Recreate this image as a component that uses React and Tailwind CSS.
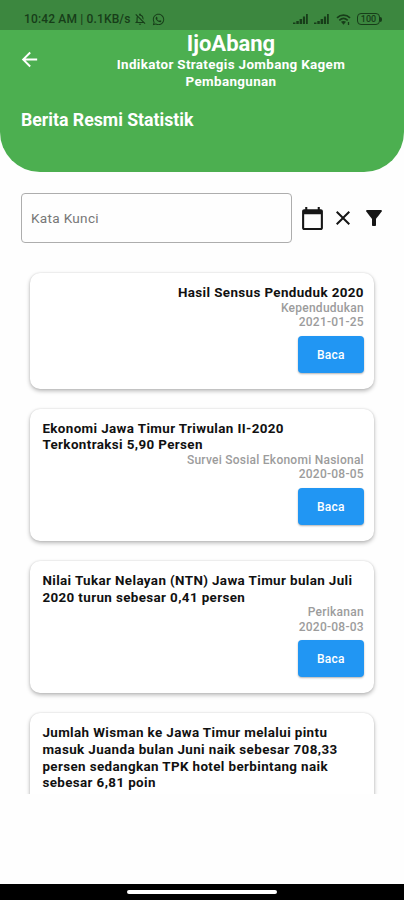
import {
  MdArrowBack,
  MdCalendarToday,
  MdClose,
  MdFilterAlt,
  MdOutlineNotificationsOff,
} from "react-icons/md";
import { FaWhatsapp } from "react-icons/fa";

const news = [
  {
    lines: ["Hasil Sensus Penduduk 2020"],
    category: "Kependudukan",
    date: "2021-01-25",
    alignRight: true,
  },
  {
    lines: ["Ekonomi Jawa Timur Triwulan II-2020", "Terkontraksi 5,90 Persen"],
    category: "Survei Sosial Ekonomi Nasional",
    date: "2020-08-05",
  },
  {
    lines: ["Nilai Tukar Nelayan (NTN) Jawa Timur bulan Juli", "2020 turun sebesar 0,41 persen"],
    category: "Perikanan",
    date: "2020-08-03",
  },
  {
    lines: [
      "Jumlah Wisman ke Jawa Timur melalui pintu",
      "masuk Juanda bulan Juni naik sebesar 708,33",
      "persen sedangkan TPK hotel berbintang naik",
      "sebesar 6,81 poin",
    ],
  },
];

function Signal() {
  return (
    <svg width="16" height="12" viewBox="0 0 16 12" fill="currentColor">
      <path d="M0 9.500h2.500V11H0zM3.300 8h2.500v3H3.300zM6.600 6h2.500v5H6.600zM9.900 3.500h2.200V11H9.900zM13 1h1.800v10H13z" />
    </svg>
  );
}

function Wifi() {
  return (
    <svg width="15" height="13" viewBox="0 0 15 13" fill="none" stroke="currentColor" strokeWidth="1.7">
      <path d="M1 4.800C4.800 1.200 10.200 1.200 14 4.800M3.300 7.300c2.500-2.200 5.900-2.200 8.400 0" />
      <path d="M5 8.800c1.500-1.200 3.500-1.200 5 0L7.500 11.800z" fill="currentColor" stroke="none" />
      <path d="M12.500 9v3" strokeWidth="1.300" />
    </svg>
  );
}

function StatusBar() {
  return (
    <div className="h-[30px] shrink-0 bg-[#3c873f] text-[#173d19] flex items-center justify-between pl-6 pr-[22px] pt-[8px]">
      <div className="flex items-center text-[12px] leading-4 font-medium whitespace-nowrap">
        <span className="w-[107px] tracking-[0.15px]">10:42 AM | 0.1KB/s</span>
        <MdOutlineNotificationsOff size={14} className="ml-[2px]" />
        <FaWhatsapp size={13} className="ml-[5px]" />
      </div>
      <div className="flex items-center">
        <Signal />
        <span className="w-[5px]" />
        <Signal />
        <span className="w-[6px]" />
        <Wifi />
        <div className="ml-[6px] w-[23px] h-[12px] border-[1.500px] border-current rounded-[4px] text-[9px] leading-[10px] text-center font-medium">
          100
        </div>
        <span className="w-[2px] h-[5px] bg-current rounded-r-sm" />
      </div>
    </div>
  );
}

function NewsCard({ item }) {
  return (
    <div className="shrink-0 bg-white rounded-[10px] pl-3 pr-[10.5px] pt-[11.8px] pb-[15.8px] shadow-[0_2px_4px_rgba(0,0,0,0.28),0_0_2px_rgba(0,0,0,0.12)]">
      <h2
        className={`text-[13.4px] leading-[16.7px] font-bold text-[#111111] whitespace-nowrap tracking-[0.38px] ${
          item.alignRight ? "text-right" : ""
        }`}
      >
        {item.lines.map((line) => (
          <span key={line} className="block">{line}</span>
        ))}
      </h2>
      {item.category && (
        <>
          <div className="-mt-[1.2px] text-right text-[12px] leading-[14.5px] font-medium text-[#9c9c9c] tracking-[0.25px]">
            <p>{item.category}</p>
            <p>{item.date}</p>
          </div>
          <div className="flex justify-end mt-[6.3px]">
            <button className="w-[66px] h-[37px] rounded-[4px] bg-[#2196f3] text-white text-[12px] font-medium tracking-[0.3px] shadow-[0_1px_2px_rgba(0,0,0,0.3)]">
              Baca
            </button>
          </div>
        </>
      )}
    </div>
  );
}

function App() {
  return (
    <div className="w-[404px] h-[900px] bg-[#fefefe] font-[Roboto,sans-serif] flex flex-col overflow-hidden">
      <StatusBar />

      {/* Header */}
      <header className="h-[142px] shrink-0 bg-[#4caf50] rounded-b-[40px] text-white font-bold">
        <div className="flex pl-[18px]">
          <MdArrowBack size={23} className="mt-[18px] shrink-0" />
          <div className="w-[258px] ml-[61px] text-center">
            <h1 className="text-[22px] leading-[27px]">IjoAbang</h1>
            <p className="text-[13.4px] leading-[16.5px] tracking-[0.35px]">
              Indikator Strategis Jombang Kagem <br />
              Pembangunan
            </p>
          </div>
        </div>
        <h2 className="ml-[21px] mt-[19px] text-[17.7px] leading-[22px]">Berita Resmi Statistik</h2>
      </header>

      {/* Search */}
      <div className="flex items-center mt-[21px] pl-[21px] shrink-0">
        <input
          placeholder="Kata Kunci"
          className="w-[271px] h-[50px] border border-[#adadad] rounded-[4px] px-[9px] text-[13.6px] tracking-[0.3px] placeholder:text-[#777777] outline-none"
        />
        <MdCalendarToday size={25} className="ml-[8px] text-[#161616]" />
        <MdClose size={24} className="ml-[6px] text-[#161616]" />
        <MdFilterAlt size={24} className="ml-[7px] text-[#161616]" />
      </div>

      {/* News list */}
      <div className="h-[531px] mt-[20px] pt-[10.4px] pl-[30.4px] pr-[29.6px] shrink-0 overflow-hidden flex flex-col gap-[20.1px]">
        {news.map((item) => (
          <NewsCard key={item.lines[0]} item={item} />
        ))}
      </div>

      {/* Android navigation bar */}
      <div className="mt-auto h-[16px] shrink-0 bg-black flex items-center justify-center">
        <div className="w-[150px] h-[4px] rounded-full bg-white" />
      </div>
    </div>
  );
}

export default App;
